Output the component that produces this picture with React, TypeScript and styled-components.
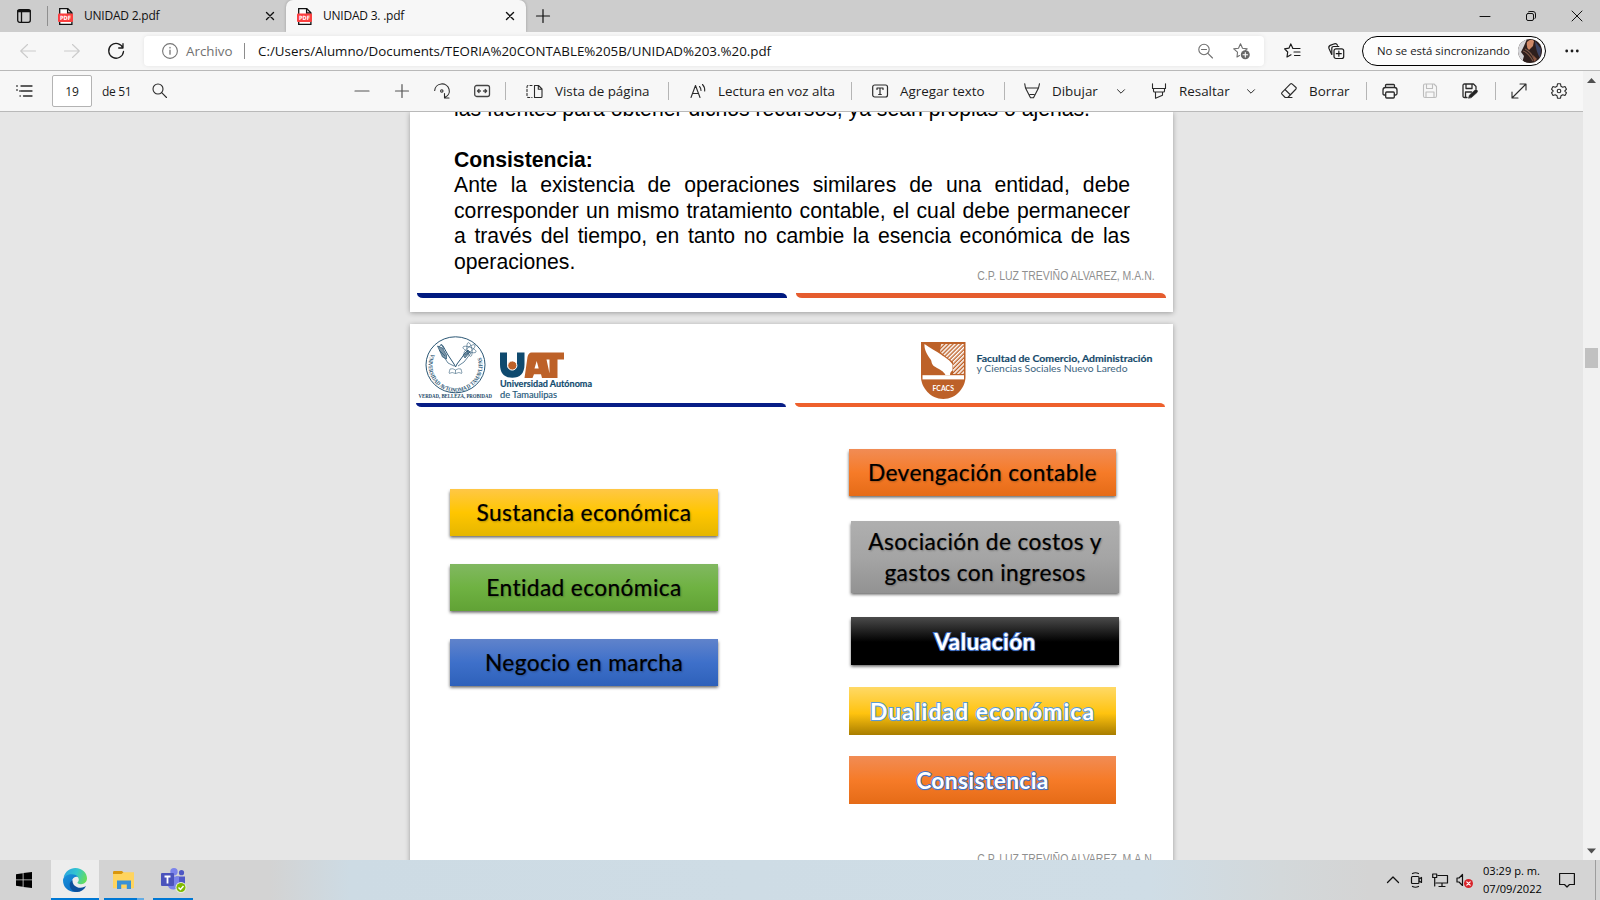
import React from 'react';
import styled, { createGlobalStyle, css } from 'styled-components';

const Global = createGlobalStyle`
  * { box-sizing: border-box; }
  html, body { margin: 0; overflow: hidden; background: #e6e6e6; }
  body { font-family: "Open Sans", "Noto Sans", sans-serif; color: #1b1b1b; }
  svg { display: block; flex: none; overflow: visible; }
`;

const Screen = styled.div`
  width: 1600px;
  height: 900px;
  display: flex;
  flex-direction: column;
  overflow: hidden;
`;

/* ---------- tab strip ---------- */
const TabStrip = styled.header`
  height: 32px;
  flex: none;
  display: flex;
  align-items: center;
  background: #cdcdcd;
`;
const TabActions = styled.div`
  width: 48px;
  height: 20px;
  padding-left: 17px;
  display: flex;
  align-items: center;
  border-right: 1px solid #8f8f8f;
`;
const Tab = styled.div<{ $active?: boolean }>`
  width: ${p => (p.$active ? 240 : 238)}px;
  height: 32px;
  padding: 0 12px 0 ${p => (p.$active ? 11 : 10)}px;
  display: flex;
  align-items: center;
  font-size: 12px;
  letter-spacing: -0.22px;
  color: #111;
  ${p => p.$active && css`
    background: #f7f7f7;
    border-radius: 7px 7px 0 0;
    box-shadow: 0 0 3px rgba(0, 0, 0, 0.25);
    clip-path: inset(0 -4px 0 -4px);
  `}
`;
const TabTitle = styled.span`
  flex: 1;
  margin-left: 11px;
  line-height: 16px;
`;
const NewTab = styled.div`
  margin-left: 10px;
`;
const WindowButtons = styled.div`
  margin-left: auto;
  padding-right: 18px;
  display: flex;
  align-items: center;
  gap: 36px;
`;

/* ---------- address bar ---------- */
const NavBar = styled.div`
  height: 39px;
  flex: none;
  display: flex;
  align-items: center;
  padding-left: 20px;
  background: #f7f7f7;
  border-bottom: 1px solid #b9b9b9;
`;
const NavButtons = styled.div`
  width: 124px;
  display: flex;
  gap: 28px;
`;
const AddressField = styled.div`
  width: 1120px;
  height: 30px;
  padding: 0 14px 0 18px;
  display: flex;
  align-items: center;
  background: #fff;
  border-radius: 4px;
  box-shadow: 0 0 4px rgba(0, 0, 0, 0.08);
  font-size: 13.35px;
`;
const Scheme = styled.span`
  width: 59px;
  margin-left: 8px;
  padding-right: 10px;
  color: #717171;
  border-right: 1px solid #8c8c8c;
  line-height: 16px;
`;
const Url = styled.span`
  flex: 1;
  margin-left: 13px;
  color: #111;
`;
const FieldIcons = styled.div`
  display: flex;
  gap: 20px;
`;
const NavIcons = styled.div`
  display: flex;
  gap: 28px;
  margin: 0 18px 0 20px;
`;
const Profile = styled.div`
  width: 184px;
  height: 30px;
  padding: 0 3px 1px 14px;
  display: flex;
  align-items: center;
  justify-content: space-between;
  border: 1.5px solid #000;
  border-radius: 15px;
  background: #fdfdfd;
  font-size: 11.4px;
  line-height: 14px;
  white-space: nowrap;
`;
const MoreMenu = styled.div`
  margin-left: 19px;
`;

/* ---------- viewer ---------- */
const Viewer = styled.main`
  height: 789px;
  flex: none;
  display: flex;
`;
const ViewerBody = styled.div`
  width: 1583px;
  display: flex;
  flex-direction: column;
`;
const PdfBar = styled.div`
  height: 41px;
  flex: none;
  display: flex;
  align-items: center;
  padding-left: 16px;
  background: #f7f7f7;
  border-bottom: 1px solid #b9b9b9;
  font-size: 13.4px;
  white-space: nowrap;
`;
const PageInput = styled.div`
  width: 40px;
  height: 32px;
  margin: 0 10px 0 20px;
  display: flex;
  align-items: center;
  justify-content: center;
  background: #fff;
  border: 1px solid #b3b3b3;
  border-radius: 2px;
  font-size: 12px;
`;
const PageCount = styled.span`
  width: 50px;
  font-size: 12px;
  letter-spacing: -0.3px;
`;
const ZoomGroup = styled.div`
  margin-left: 187px;
  display: flex;
  gap: 24px;
  align-items: center;
`;
const Rule = styled.i<{ $l: number; $r: number }>`
  width: 1px;
  height: 18px;
  background: #b5b5b5;
  margin: 0 ${p => p.$r}px 0 ${p => p.$l}px;
`;
const Tool = styled.div<{ $w: number }>`
  width: ${p => p.$w}px;
  display: flex;
  align-items: center;
  gap: 12px;
`;
const Caret = styled.div<{ $r: number }>`
  width: 9px;
  margin-right: ${p => p.$r}px;
`;
const FileTools = styled.div<{ $gap: number }>`
  display: flex;
  gap: ${p => p.$gap}px;
`;
const ScrollTrack = styled.div`
  width: 17px;
  padding: 6px 0;
  display: flex;
  flex-direction: column;
  align-items: center;
  background: #f1f1f1;
`;
const ScrollThumb = styled.div`
  width: 13px;
  height: 20px;
  margin: 265px 0 auto;
  background: #c1c1c1;
`;
const Pages = styled.div`
  flex: 1;
  min-height: 0;
  overflow: hidden;
  display: flex;
  flex-direction: column;
  align-items: flex-start;
  gap: 12px;
  padding-left: 410px;
  background: #e6e6e6;
`;
const Sheet = styled.section<{ $h: number }>`
  width: 763px;
  height: ${p => p.$h}px;
  flex: none;
  display: flex;
  flex-direction: column;
  background: #fff;
  box-shadow: 0 1px 5px rgba(0, 0, 0, 0.32);
`;
const Prose = styled.div`
  height: 166px;
  flex: none;
  margin: -16.5px 0 0 44px;
  width: 676px;
  font: 21.2px/25.5px "Liberation Sans", Arial, sans-serif;
  color: #000;
`;
const Line = styled.p<{ $last?: boolean; $bold?: boolean }>`
  margin: 0;
  height: 25.5px;
  white-space: nowrap;
  font-weight: ${p => (p.$bold ? 700 : 400)};
  text-align: justify;
  text-align-last: ${p => (p.$last ? 'left' : 'justify')};
`;
const Credit = styled.p<{ $top: number; $right: number }>`
  flex: none;
  margin: ${p => p.$top}px ${p => p.$right}px 0 auto;
  font: 12.5px/14px "Liberation Sans", Arial, sans-serif;
  color: #8f8f8f;
  white-space: nowrap;
  transform: scaleX(0.838);
  transform-origin: right;
`;
const Stripes = styled.div<{ $top: number; $left: number }>`
  flex: none;
  display: flex;
  gap: 9px;
  margin: ${p => p.$top}px 0 0 ${p => p.$left}px;
`;
const Stripe = styled.div<{ $c: string }>`
  width: 370px;
  height: 4.5px;
  background: ${p => p.$c};
  border-radius: 0 6px 0 6px / 0 4.5px 0 4.5px;
`;
const LogoRow = styled.div`
  height: 78.5px;
  flex: none;
  padding: 12px 20px 0 6.5px;
  display: flex;
`;
const UniversityMark = styled.div`
  flex: 1;
  margin-left: 7.5px;
`;
const Columns = styled.div`
  height: 444px;
  flex: none;
  display: flex;
  align-items: flex-start;
`;
const LeftColumn = styled.div`
  margin: 82px 131px 0 40px;
  display: flex;
  flex-direction: column;
  gap: 28px;
`;
const RightColumn = styled.div`
  margin-top: 42px;
  display: flex;
  flex-direction: column;
`;

type Tone = 'gold' | 'green' | 'blue' | 'orange' | 'gray' | 'black' | 'amber';
const tones: Record<Tone, string> = {
  gold: 'linear-gradient(#ffc746, #ffc600 50%, #e5b600)',
  green: 'linear-gradient(#81b861, #6fb242 50%, #61a235)',
  blue: 'linear-gradient(#6083cb, #3e70ca 50%, #2e61ba)',
  orange: 'linear-gradient(#f18c55, #f67b28 50%, #e56b17)',
  gray: 'linear-gradient(#afafaf, #a5a5a5 50%, #929292)',
  black: 'linear-gradient(#4b4b4b, #000 52%)',
  amber: 'linear-gradient(#ffd966, #ffc30f 55%, #a87d00)',
};
const Block = styled.div<{ $tone: Tone; $w?: number; $h?: number; $top?: number; $shift?: number; $flat?: boolean }>`
  width: ${p => p.$w ?? 268}px;
  height: ${p => p.$h ?? 47}px;
  margin: ${p => p.$top ?? 0}px 0 0 ${p => p.$shift ?? 0}px;
  display: flex;
  align-items: center;
  justify-content: center;
  text-align: center;
  white-space: pre-line;
  background: ${p => tones[p.$tone]};
  box-shadow: ${p => (p.$flat ? 'none' : '0 1.5px 3px rgba(0, 0, 0, 0.63)')};
  font: 22.7px/31px Lato, sans-serif;
  letter-spacing: 0.4px;
  color: #000;
  -webkit-text-stroke: 0.2px #000;
  text-shadow: 1px 1px 2px rgba(0, 0, 0, 0.28);
`;
const Outlined = styled.span<{ $edge: string; $wide?: boolean }>`
  font-weight: 700;
  letter-spacing: ${p => (p.$wide ? 1.15 : 0.4)}px;
  color: #fff;
  -webkit-text-stroke: 2px ${p => p.$edge};
  paint-order: stroke fill;
  text-shadow: 0 1px 1px ${p => p.$edge};
`;

/* ---------- taskbar ---------- */
const Taskbar = styled.footer`
  height: 40px;
  flex: none;
  display: flex;
  align-items: stretch;
  background: linear-gradient(90deg, #d3d3d3 0, #d3d3d3 270px, #cddbe4 350px, #cfdde6 1150px, #d3d8da 1280px, #d4d4d4 1370px);
`;
const TaskButton = styled.div<{ $w: number; $gap: number; $open?: 'focused' | 'open' | 'stacked' }>`
  width: ${p => p.$w}px;
  margin-right: ${p => p.$gap}px;
  padding-top: 2px;
  display: flex;
  align-items: center;
  justify-content: center;
  background: ${p => (p.$open === 'focused' ? '#ededed' : 'transparent')};
  border-bottom: 2px solid ${p => (p.$open ? '#0078d4' : 'transparent')};
  ${p => p.$open === 'stacked' && css`
    border-width: 0 0 2px;
    border-image: linear-gradient(90deg, #0078d4 80%, #63abe3 80%) 2;
  `}
`;
const Tray = styled.div`
  margin-left: auto;
  display: flex;
  align-items: center;
`;
const TrayIcons = styled.div`
  width: 97px;
  display: flex;
  align-items: center;
  gap: 9.5px;
`;
const Clock = styled.div`
  width: 76px;
  font-size: 11.1px;
  line-height: 18px;
  color: #000;
`;
const ShowDesktop = styled.div`
  width: 5px;
  height: 40px;
  margin-left: 20px;
  border-left: 1px solid #9d9d9d;
`;

/* ---------- icons ---------- */
type IconProps = { w?: number; h?: number; c?: string; sw?: number; children: React.ReactNode };
const Icon = ({ w = 16, h = 16, c = '#2b2b2b', sw = 1.1, children }: IconProps) => (
  <svg width={w} height={h} viewBox={`0 0 ${w} ${h}`} fill="none" stroke={c} strokeWidth={sw} strokeLinecap="round" strokeLinejoin="round">
    {children}
  </svg>
);

const PdfIcon = () => (
  <svg width="15" height="17" viewBox="0 0 15 17">
    <path d="M1.700.7h8.100l4.100 4.100v11.500H1.700z" fill="#fff" stroke="#111" strokeWidth="1.300" />
    <path d="M9.600.8v4.200h4.200" fill="none" stroke="#111" strokeWidth="1.300" />
    <rect x="0" y="5.500" width="15" height="8.500" rx="1" fill="#fb3f3f" />
    <text x="2" y="11.900" textLength="11" lengthAdjust="spacingAndGlyphs" fontFamily="DejaVu Sans" fontWeight="700" fontSize="5.800" letterSpacing="0" fill="#fff">PDF</text>
  </svg>
);
const CloseTab = () => <Icon w={8} h={8} c="#111" sw={1.4}><path d="M.5.5l7 7M7.500.5l-7 7" /></Icon>;
const CaretIcon = () => <Icon w={8} h={5} sw={1}><path d="M.5.7L4 4.200 7.500.7" /></Icon>;

const Seal = () => (
  <svg width="76" height="64" viewBox="0 0 76 64">
    <ellipse cx="38.5" cy="28.8" rx="29.5" ry="28" fill="none" stroke="#2a5674" strokeWidth="1" />
    <defs><path id="ring" d="M14.300 17.900a27 26.300 0 1 0 48.400 0" /></defs>
    <text fontFamily="Liberation Serif" fontWeight="700" fontSize="6" fill="#2a5674">
      <textPath href="#ring" textLength="104" lengthAdjust="spacingAndGlyphs">VNIVERSIDAD AVTONOMA D TAMAVLIPAS</textPath>
    </text>
    <path d="M22 11c1-2 3-3 4-1l5 9 6 9 1.500 3 1.500-3 6-8 5-6" fill="none" stroke="#2a5674" strokeWidth="1" />
    <path d="M23 15l8 12 6 3M54 17l-7 9-6 4" fill="none" stroke="#2a5674" strokeWidth=".7" />
    <path d="M20.500 10l5 11 4 2 0-4-4-7zM24 8l3 5M22 14l6 6M46 19l5-5 2 2-5 6z" fill="#7b95a7" stroke="#2a5674" strokeWidth=".7" />
    <g fill="none" stroke="#2a5674" strokeWidth=".55">
      <ellipse cx="52.500" cy="13.500" rx="7" ry="2.400" transform="rotate(20 52.500 13.500)" />
      <ellipse cx="52.500" cy="13.500" rx="7" ry="2.400" transform="rotate(80 52.500 13.500)" />
      <ellipse cx="52.500" cy="13.500" rx="7" ry="2.400" transform="rotate(140 52.500 13.500)" />
      <path d="M32 37.500q3-2 6.500 0 3.500-2 6.500 0M33 33l-1 4M44 33l1 4M33 33q3-1 5.500 1 3-2 5.500-1M38.500 34v3.500" />
    </g>
    <text x="1.500" y="61.500" textLength="73.500" lengthAdjust="spacingAndGlyphs" fontFamily="Liberation Serif" fontWeight="700" fontSize="5.300" fill="#1d4a69">VERDAD, BELLEZA, PROBIDAD</text>
  </svg>
);
const UatLogo = () => (
  <svg width="94" height="64" viewBox="0 0 94 64">
    <path d="M0 16.500h7V28c0 4 1.800 5.800 5 5.800s5-1.800 5-5.800V16.500h7.500v12c0 9-4.500 13.200-12.300 13.200S0 37.500 0 28.500z" fill="#0f4a6e" />
    <circle cx="12.300" cy="29.500" r="4.600" fill="#bd6128" stroke="#fff" strokeWidth="1" />
    <path d="M31.500 16.500H64v7h-6.500V42h-8V23.500H46.500L50.500 42h-8.500l-1-3.700h-7L32.500 42h-8L27.500 21q1-4.500 4-4.500zM36.700 25l-2.200 7.500h4.200z" fill="#bd6128" />
    <text x="0" y="51.300" textLength="92" lengthAdjust="spacingAndGlyphs" fontFamily="Lato" fontWeight="700" fontSize="8.600" fill="#0f4a6e" stroke="#0f4a6e" strokeWidth=".15">Universidad Autónoma</text>
    <text x="0" y="61.700" textLength="57" lengthAdjust="spacingAndGlyphs" fontFamily="Lato" fontSize="8.600" fill="#24587a" stroke="#24587a" strokeWidth=".15">de Tamaulipas</text>
  </svg>
);
const FacultyLogo = () => (
  <svg width="232" height="64" viewBox="0 0 232 64">
    <defs>
      <pattern id="hatch" width="2.900" height="2.900" patternUnits="userSpaceOnUse" patternTransform="rotate(45)">
        <rect width="1.500" height="2.900" fill="#fff" />
      </pattern>
      <clipPath id="hatchArea"><path d="M20 8h23v30H32V26L19 16z" /></clipPath>
    </defs>
    <path d="M0 6h44.500v35c0 10-9 22-22.200 22S0 51 0 41z" fill="#bd6128" />
    <rect x="17" y="8" width="26" height="30" fill="url(#hatch)" clipPath="url(#hatchArea)" />
    <path d="M3.500 8c5 4 12 7 16.500 10.500 4 3 10 6.500 11.500 10v6c-1.500 1-2.500 2-2.500 4.500h-4.500c-2-4-6-5.500-10-8-4-2.200-3.500-4-4.500-7C6 19 3 13 3.500 8z" fill="#fff" />
    <rect x="1.500" y="39.200" width="41.500" height="4.200" fill="#fff" />
    <text x="11.500" y="55" textLength="21.500" lengthAdjust="spacingAndGlyphs" fontFamily="Lato" fontWeight="700" fontSize="6.800" fill="#fff">FCACS</text>
    <text x="55.500" y="26.300" textLength="176" lengthAdjust="spacingAndGlyphs" fontFamily="Lato" fontWeight="700" fontSize="9.300" fill="#164a6b" stroke="#164a6b" strokeWidth=".15">Facultad de Comercio, Administración</text>
    <text x="55.500" y="36" textLength="151" lengthAdjust="spacingAndGlyphs" fontFamily="Lato" fontSize="9.300" fill="#3c6480">y Ciencias Sociales Nuevo Laredo</text>
  </svg>
);

const EdgeLogo = () => (
  <svg width="24" height="24" viewBox="0 0 24 24">
    <defs>
      <linearGradient id="eTop" x1="0" y1=".3" x2="1" y2=".6"><stop offset="0" stopColor="#2aa5e0" /><stop offset=".5" stopColor="#33c6cf" /><stop offset="1" stopColor="#67de58" /></linearGradient>
      <linearGradient id="eLeft" x1="0" y1="0" x2=".6" y2="1"><stop offset="0" stopColor="#1a93dc" /><stop offset="1" stopColor="#0b6ec4" /></linearGradient>
    </defs>
    <path d="M.6 9.500C2 3.500 7 0 12.300 0 19.500 0 24 5.200 24 10.300c0 3.700-2.700 5.900-6 5.900-3 0-3.700-1-3.500-1.600.3-.6 1.300-1.400 1.300-2.800C15.800 9.500 13.500 7 9.500 7 5.500 7 2.500 8 .6 9.500z" fill="url(#eTop)" />
    <path d="M0 12.500C0 8.800 4 6.300 8.800 6.300c3 0 5.400 1.200 6.400 3-3.400-1.600-6.200 1-6.200 4.200 0 4.500 3.500 8 6.500 9.800-1.500.5-2.500.7-3.500.7C5 24 0 18.800 0 12.500z" fill="url(#eLeft)" />
    <path d="M9.600 12.300c-.6 4.700 4.200 7.700 7.900 7.500 2.700-.2 4.500-1.400 5.600-1.900C21 22 17.500 24 14 24c-5-.5-7.300-4-7.300-7.300 0-2.300 1.200-3.600 2.900-4.400z" fill="#0c509c" />
  </svg>
);
const ExplorerLogo = () => (
  <svg width="22" height="18" viewBox="0 0 22 18">
    <path d="M0 1.200Q0 0 1.200 0H9l1.500 1.500V5H0z" fill="#d9960c" />
    <path d="M0 3h8.500L10.500 1.300h10.500v16H0z" fill="#ffd45e" />
    <path d="M4 9.500h14V18h-4.200v-4.500H8.200V18H4z" fill="#3a91d6" />
  </svg>
);
const TeamsLogo = () => (
  <svg width="24" height="25" viewBox="0 0 24 25">
    <circle cx="13" cy="3.700" r="3.700" fill="#7b83eb" />
    <circle cx="20.500" cy="4.700" r="2.600" fill="#4f58c4" />
    <path d="M15 8.500h9V16a4.500 4.500 0 0 1-9 0z" fill="#5059c9" />
    <path d="M7 8.500h11V17a5.800 5.800 0 0 1-11 1z" fill="#7b83eb" />
    <rect x="0" y="5" width="13" height="13" rx="1" fill="#4b53bc" />
    <path d="M3.500 8.500h6M6.500 8.500v7" stroke="#fff" strokeWidth="1.800" />
    <circle cx="20" cy="19.500" r="5.500" fill="#e8eedd" />
    <circle cx="20" cy="19.500" r="4.500" fill="#7fba00" />
    <path d="M17.500 19.500l2 2 3-3.500" fill="none" stroke="#fff" strokeWidth="1.500" />
  </svg>
);
const Avatar = () => (
  <svg width="24" height="24" viewBox="0 0 24 24">
    <defs><clipPath id="face"><circle cx="12" cy="12" r="12" /></clipPath></defs>
    <g clipPath="url(#face)">
      <rect width="24" height="24" fill="#2e1f1d" />
      <path d="M0 0h9L6 7l-3 6 3 4-2 7H0z" fill="#d5d5d8" />
      <path d="M9 3q4-4 7-1l-1 5-4 4q-3-2-2-8z" fill="#d08a68" />
      <path d="M5 12q5 1 10 10M7 10q6 3 9 10" stroke="#7a5646" strokeWidth="1.200" fill="none" />
      <path d="M17 2l6 8-1 9q-4-6-5-17z" fill="#3d4566" />
      <path d="M15 16l4 4-3 3z" fill="#8a5540" />
    </g>
  </svg>
);

export default function App() {
  return (
    <Screen>
      <Global />
      <TabStrip>
        <TabActions>
          <Icon w={14} h={14} c="#111" sw={1.3}><rect x=".7" y=".7" width="12.600" height="12.600" rx="2" /><path d="M1 2.500h12M1 1.500h12" strokeWidth="1.500" /><path d="M4.500 3.500V13" /></Icon>
        </TabActions>
        <Tab><PdfIcon /><TabTitle>UNIDAD 2.pdf</TabTitle><CloseTab /></Tab>
        <Tab $active><PdfIcon /><TabTitle>UNIDAD 3. .pdf</TabTitle><CloseTab /></Tab>
        <NewTab><Icon w={14} h={14} c="#111" sw={1.2}><path d="M7 .5v13M.5 7h13" /></Icon></NewTab>
        <WindowButtons>
          <Icon w={10} h={10} c="#111" sw={1}><path d="M0 5.500h10" /></Icon>
          <Icon w={10} h={10} c="#111" sw={1}><rect x=".5" y="2.500" width="7" height="7" rx="1.500" /><path d="M2.500.8Q3 .5 4 .5h3Q9.500.5 9.500 3v3q0 1-.5 1.500" /></Icon>
          <Icon w={10} h={10} c="#111" sw={1}><path d="M0 0l10 10M10 0L0 10" /></Icon>
        </WindowButtons>
      </TabStrip>

      <NavBar>
        <NavButtons>
          <Icon c="#cbcbcb"><path d="M15.500 8H.7M7.500 1.500L.7 8l6.800 6.500" /></Icon>
          <Icon c="#cbcbcb"><path d="M.5 8h14.800M8.500 1.500L15.300 8l-6.800 6.500" /></Icon>
          <Icon c="#1b1b1b" sw={1.3}><path d="M15 5A7.400 7.400 0 1 0 15.500 8.500M15 .7V5h-4.300" /></Icon>
        </NavButtons>
        <AddressField>
          <Icon c="#757575"><circle cx="8" cy="8" r="7.400" /><path d="M8 7.200v4M8 4.500v.4" strokeWidth="1.300" /></Icon>
          <Scheme>Archivo</Scheme>
          <Url>C:/Users/Alumno/Documents/TEORIA%20CONTABLE%205B/UNIDAD%203.%20.pdf</Url>
          <FieldIcons>
            <Icon w={15} c="#6f6f6f"><circle cx="6" cy="6.500" r="5.200" /><path d="M3.500 6.500h5M9.900 10.400l4.600 4.600" /></Icon>
            <Icon w={17} c="#6f6f6f"><path d="M4 14l2.500-1.400M4 14l.5-4.800L.7 5.900l4.800-.6L7.500.8l2 4.500 4.700.6-2 1.800" /><circle cx="12.300" cy="11.800" r="4.500" fill="#666" stroke="none" /><path d="M12.300 9.500v4.600M10 11.800h4.600" stroke="#fff" /></Icon>
          </FieldIcons>
        </AddressField>
        <NavIcons>
          <Icon c="#1b1b1b" sw={1.200}><path d="M8.800 5.200L6.800.9 4.900 5.200l-4.300.6L3.700 9 3 14l4-2.200M8.800 5.500H16M10 9H16M10.500 12.500H16" /></Icon>
          <Icon c="#1b1b1b" sw={1.200}><path d="M3.500 11L1 5.500Q.3 3.300 2.200 2.400L6.500.8q2-.5 3 1.500" /><path d="M3.800 11.500V5.500q0-2 2-2h5" /><rect x="6" y="5.800" width="9.700" height="9.700" rx="2" /><path d="M10.850 8.200v5M8.300 10.700h5" /></Icon>
        </NavIcons>
        <Profile>No se está sincronizando<Avatar /></Profile>
        <MoreMenu><Icon w={14} h={4} c="none"><g fill="#1b1b1b"><circle cx="1.700" cy="2" r="1.400" /><circle cx="7" cy="2" r="1.400" /><circle cx="12.300" cy="2" r="1.400" /></g></Icon></MoreMenu>
      </NavBar>

      <Viewer>
        <ViewerBody>
          <PdfBar>
            <Icon sw={1.300}><path d="M5 3h11M5 8h11M7.500 13H16M.7 3h.6M.7 7h.6M3.700 8h.3M4 13h.3" /></Icon>
            <PageInput>19</PageInput>
            <PageCount>de 51</PageCount>
            <Icon w={15}><circle cx="6" cy="6" r="5" /><path d="M9.700 9.700l4.800 4.800" /></Icon>
            <ZoomGroup>
              <Icon w={16} c="#555" sw={1.200}><path d="M1 8h14" /></Icon>
              <Icon w={16} c="#555" sw={1.200}><path d="M1.500 8h13M8 1.500v13" /></Icon>
              <Icon w={16}><path d="M.7 7.500A7.300 7 0 1 1 11 14.300M10.500 10.500v4.500h4.500" /><circle cx="7.800" cy="8" r="1.200" /></Icon>
              <Icon w={16} c="#444" sw={1.300}><rect x=".7" y="2.500" width="14.800" height="11" rx="2" /><path d="M3.500 8h3M9.500 8h3M5 6.500L3.500 8 5 9.500M11.200 6.500l1.500 1.500-1.500 1.500" /></Icon>
            </ZoomGroup>
            <Rule $l={15} $r={20} />
            <Tool $w={142}><Icon w={17}><path d="M8.500 2.500h4l3.500 3.500v7.500q0 1-1 1H8.500zM12.300 2.700V6.200H16" /><path d="M6 2.500H2.500Q1 2.500 1 4v9q0 1.500 1.500 1.500H6" strokeDasharray="2 2" /></Icon>Vista de página</Tool>
            <Rule $l={0} $r={21} />
            <Tool $w={161}><Icon w={16}><path d="M1 14.500L5.500 2.500l4.500 12M2.500 10.500h6M9.500 3.500q1.500 1.500 1.500 4M12.500 1.500q2.500 2.500 2.200 6.500" /></Icon>Lectura en voz alta</Tool>
            <Rule $l={0} $r={20} />
            <Tool $w={132}><Icon sw={1.200}><rect x=".7" y="2" width="14.800" height="12" rx="2" /><path d="M5 6.500V5h6v1.500M8 5v6.500M6.700 11.500h2.600" /></Icon>Agregar texto</Tool>
            <Rule $l={0} $r={19} />
            <Tool $w={93}><Icon><path d="M.7.700L1.500 5h13L15.500.7M1.500 5L6.500 14.700h3L14.500 5M6 11.500h4" /></Icon>Dibujar</Tool>
            <Caret $r={25}><CaretIcon /></Caret>
            <Tool $w={96}><Icon><path d="M1.500.7V5.500h13V.7M2.500 5.500V8q0 1 1 1h9q1 0 1-1V5.500M4.500 9v6.300l7-3V9" /></Icon>Resaltar</Tool>
            <Caret $r={25}><CaretIcon /></Caret>
            <Tool $w={85}><Icon><path d="M9.200 1.200L.9 9.700q-.7.800 0 1.500l3.300 3.300h2.600L15 6q.7-.8 0-1.500L11 .9q-.9-.6-1.800.3zM4 6.500l5.500 5.500M5.500 14.500H11" /></Icon>Borrar</Tool>
            <Rule $l={0} $r={15} />
            <FileTools $gap={25}>
              <Icon sw={1.300}><path d="M3.500 4.500v-2q0-1 1-1h7q1 0 1 1v2M3.500 12H2.300Q1 12 1 10.500V7q0-2.500 2.500-2.500h9Q15 4.500 15 7v3.500q0 1.500-1.500 1.500h-1" /><rect x="3.700" y="9" width="8.600" height="6" rx="1" /></Icon>
              <Icon w={14} c="#bdbdbd"><path d="M.5 2.500Q.5 1 2 1h9L13.500 3.500v9.500q0 1.500-1.500 1.500h-10Q.5 14.500.5 13zM3.500 1v4.500h6V1M3 14.500V9h8v5.500" /></Icon>
              <Icon w={17} sw={1.300}><path d="M5 14.500H2.500Q1 14.500 1 13V2.500Q1 1 2.500 1h9L14 3.500V6M4 1v4.500h6V1M3.500 14V9h6" /><path d="M6.500 15l1-3 5.500-5q2-.8 2.500 1 0 1-.5 1.500l-5.500 5z" fill="#222" strokeWidth=".6" /></Icon>
            </FileTools>
            <Rule $l={16} $r={15} />
            <FileTools $gap={24}>
              <Icon><path d="M1.500 14.500l13-13M9 1h6v6M1 9v6h6" /></Icon>
              <Icon><path d="M6.500 .8h3l.5 2.500 1.700 1 2.300-.8 1.500 2.700L13.800 8l1.700 1.800-1.500 2.700-2.300-.8-1.700 1-.5 2.500h-3L6 12.700l-1.700-1-2.300.8L.5 9.800 2.200 8 .5 6.200 2 3.500l2.300.8 1.700-1z" /><circle cx="8" cy="8" r="1.800" /></Icon>
            </FileTools>
          </PdfBar>

          <Pages>
            <Sheet $h={200}>
              <Prose>
                <Line $last>las fuentes para obtener dichos recursos, ya sean propias o ajenas.</Line>
                <Line />
                <Line $last $bold>Consistencia:</Line>
                <Line>Ante la existencia de operaciones similares de una entidad, debe</Line>
                <Line>corresponder un mismo tratamiento contable, el cual debe permanecer</Line>
                <Line>a través del tiempo, en tanto no cambie la esencia económica de las</Line>
                <Line $last>operaciones.</Line>
              </Prose>
              <Credit $top={7} $right={18.5}>C.P. LUZ TREVIÑO ALVAREZ, M.A.N.</Credit>
              <Stripes $top={10.5} $left={6.8}>
                <Stripe $c="#001a80" />
                <Stripe $c="#e55c2e" />
              </Stripes>
            </Sheet>
            <Sheet $h={572}>
              <LogoRow>
                <Seal />
                <UniversityMark><UatLogo /></UniversityMark>
                <FacultyLogo />
              </LogoRow>
              <Stripes $top={0} $left={6.3}>
                <Stripe $c="#071d86" />
                <Stripe $c="#ee602c" />
              </Stripes>
              <Columns>
                <LeftColumn>
                  <Block $tone="gold">Sustancia económica</Block>
                  <Block $tone="green">Entidad económica</Block>
                  <Block $tone="blue">Negocio en marcha</Block>
                </LeftColumn>
                <RightColumn>
                  <Block $tone="orange" $w={267}>Devengación contable</Block>
                  <Block $tone="gray" $h={72} $top={25} $shift={2}>{'Asociación de costos y\ngastos con ingresos'}</Block>
                  <Block $tone="black" $h={48} $top={24} $shift={2}><Outlined $edge="#4472c4">Valuación</Outlined></Block>
                  <Block $tone="amber" $w={267} $h={48} $top={22} $flat><Outlined $edge="#5b9bd5" $wide>Dualidad económica</Outlined></Block>
                  <Block $tone="orange" $w={267} $h={48} $top={21} $flat><Outlined $edge="#4472c4">Consistencia</Outlined></Block>
                </RightColumn>
              </Columns>
              <Credit $top={1} $right={18.5}>C.P. LUZ TREVIÑO ALVAREZ, M.A.N.</Credit>
            </Sheet>
          </Pages>
        </ViewerBody>
        <ScrollTrack>
          <Icon w={9} h={6} c="none"><path d="M4.500 1L9 6H0z" fill="#505050" /></Icon>
          <ScrollThumb />
          <Icon w={9} h={6} c="none"><path d="M4.500 5.500L0 .5h9z" fill="#505050" /></Icon>
        </ScrollTrack>
      </Viewer>

      <Taskbar>
        <TaskButton $w={48} $gap={3}>
          <Icon c="none"><path d="M0 2.200L6.700 1.200V7.500H0zM7.500 1.100L16 0v7.500H7.500zM0 8.300h6.700v6.500L0 13.800zM7.500 8.300H16V16l-8.500-1.100z" fill="#000" /></Icon>
        </TaskButton>
        <TaskButton $w={48} $gap={5} $open="focused"><EdgeLogo /></TaskButton>
        <TaskButton $w={40} $gap={9} $open="stacked"><ExplorerLogo /></TaskButton>
        <TaskButton $w={40} $gap={0} $open="open"><TeamsLogo /></TaskButton>
        <Tray>
          <TrayIcons>
            <Icon w={14} c="#111" sw={1.300}><path d="M1.500 10.500L7 5l5.500 5.500" /></Icon>
            <Icon w={13} c="#111" sw={1.200}><rect x="1.500" y="4.500" width="7.500" height="7" rx="1" /><path d="M9 7l2.500-1.500v5L9 9M2.500 1.500q3-1.500 6 0M2.500 14.500q3 1.500 6 0" /></Icon>
            <Icon w={16} c="#111" sw={1.200}><path d="M6 3.500h9.500v7.500H4M10 11v3M7 14.500h6M.7 2h4v3.500h-4zM2.700 5.500v8.500" /></Icon>
            <Icon w={16} c="#111" sw={1.200}><path d="M-1 6h2L4.500 2.500v11L1 10h-2z" /><circle cx="10.500" cy="11.500" r="4.500" fill="#d8232a" stroke="none" /><path d="M8.800 9.800l3.400 3.400M12.200 9.800l-3.400 3.400" stroke="#fff" /></Icon>
          </TrayIcons>
          <Clock>03:29 p. m.<br />07/09/2022</Clock>
          <Icon c="#111" sw={1.200}><path d="M.6 1.500h14.800v11H10.500L8 15l-2.500-2.500H.6z" /></Icon>
          <ShowDesktop />
        </Tray>
      </Taskbar>
    </Screen>
  );
}
